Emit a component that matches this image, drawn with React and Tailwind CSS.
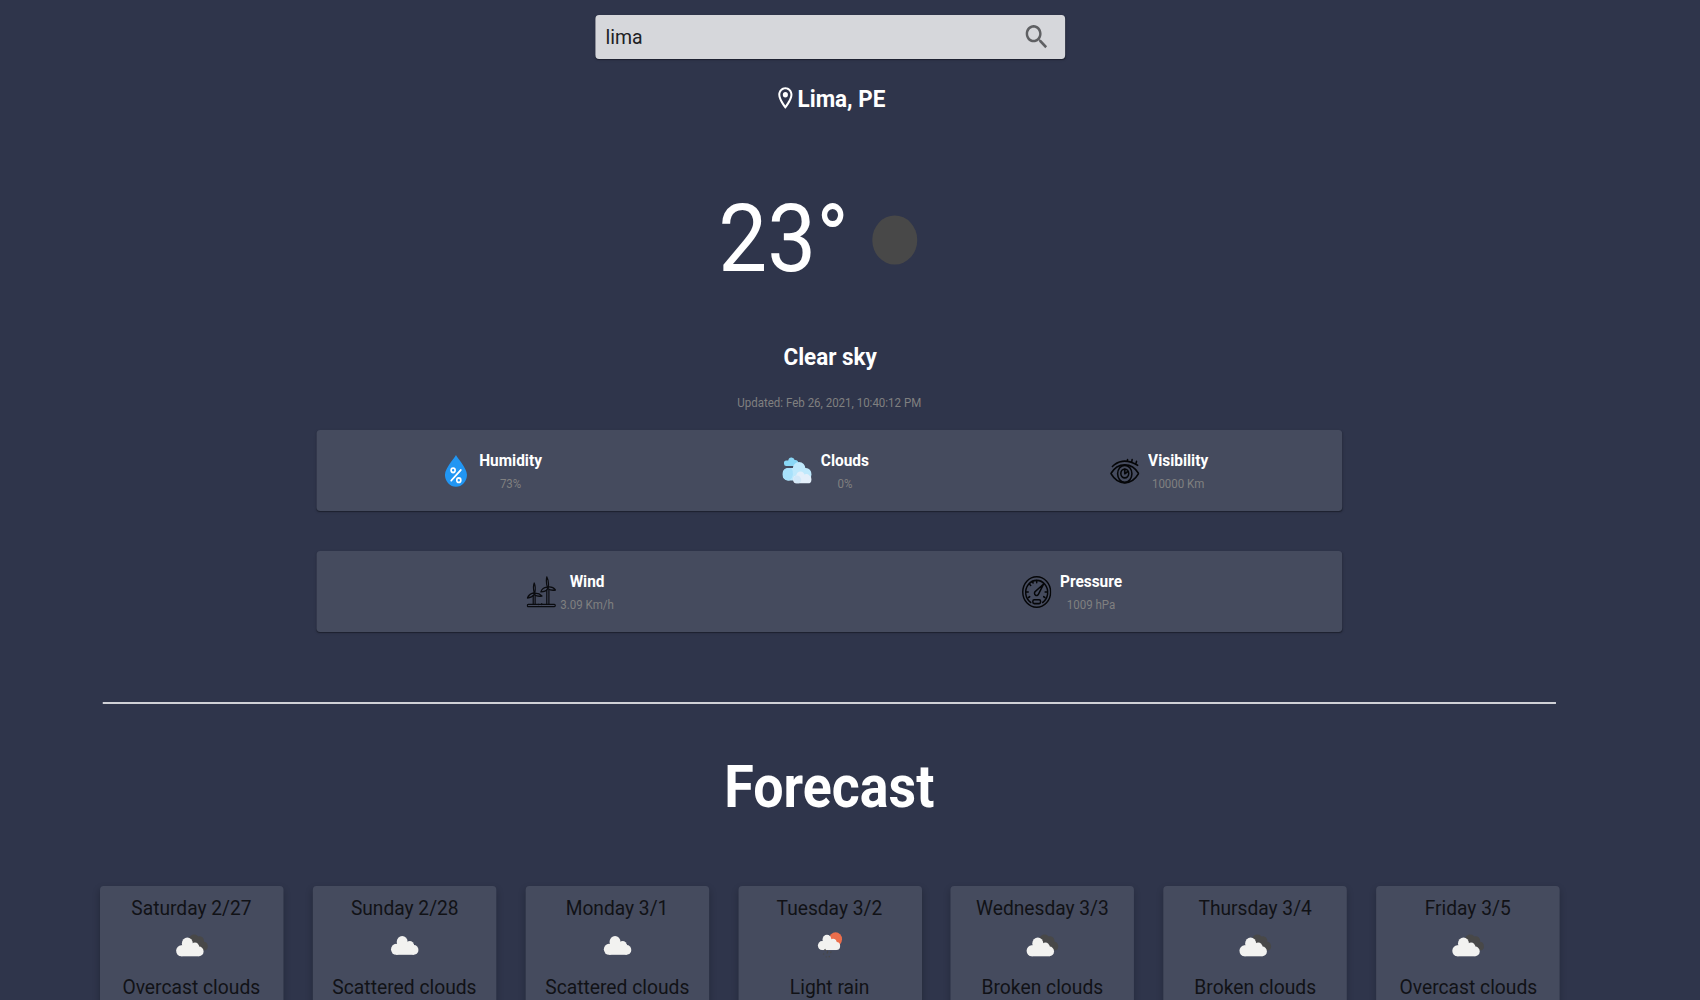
import React from "react";

function SearchIcon() {
  return (
    <svg viewBox="0 0 24 24" className="size-8 fill-[#5f6063]">
      <path d="M15.5 14h-.79l-.28-.27C15.41 12.59 16 11.11 16 9.5 16 5.91 13.09 3 9.5 3S3 5.91 3 9.5 5.91 16 9.5 16c1.61 0 3.09-.59 4.23-1.57l.27.28v.79l5 4.99L20.49 19l-4.99-5zm-6 0C7.01 14 5 11.99 5 9.5S7.01 5 9.5 5 14 7.01 14 9.5 11.99 14 9.5 14z" />
    </svg>
  );
}

function PinIcon() {
  return (
    <svg viewBox="0 0 24 24" className="-mt-0.5 h-[26px] w-[26px] fill-white">
      <path d="M12 2C8.13 2 5 5.13 5 9c0 5.25 7 13 7 13s7-7.75 7-13c0-3.87-3.13-7-7-7zM7 9c0-2.76 2.24-5 5-5s5 2.24 5 5c0 2.88-2.88 7.19-5 9.88C9.92 16.21 7 11.85 7 9z" />
      <circle cx="12" cy="9" r="2.5" />
    </svg>
  );
}

function HumidityIcon() {
  return (
    <svg viewBox="0 0 32 32" className="size-8 shrink-0">
      <path d="M16 0C17 2.500 28 13 28 19.800A12 12 0 0 1 4 19.800C4 13 15 2.500 16 0Z" fill="#2196f3" />
      <g fill="none" stroke="#fff" strokeWidth="1.800" strokeLinecap="round">
        <circle cx="12.900" cy="15.300" r="2.200" />
        <circle cx="19.100" cy="25.200" r="2.200" />
        <path d="M21.300 15 10.800 25.700" />
      </g>
    </svg>
  );
}

function CloudsIcon() {
  return (
    <svg viewBox="0 0 32 32" className="-mt-px size-8 shrink-0">
      <path d="M1.500 9.500a2.800 2.800 0 0 1 3-3h1.700a3.600 3.600 0 0 1 7-.5c2.500-.3 4.300 1.500 4.300 3.500L14 12H4.300a2.600 2.600 0 0 1-2.800-2.500Z" fill="#8ad7f5" />
      <circle cx="18" cy="15" r="7" fill="#bfe9fc" />
      <rect x="0" y="14" width="31.500" height="12.500" rx="6" fill="#bfe9fc" />
      <path d="M6 14h3.500a8.500 8.500 0 0 1-2 12.500H6A6 6 0 0 1 6 14Z" fill="#a8e1fb" />
      <circle cx="19.500" cy="22" r="4.600" fill="#e4effa" />
      <circle cx="26" cy="23.500" r="3.600" fill="#e4effa" />
      <rect x="11.500" y="21.500" width="20" height="7.800" rx="3.900" fill="#e4effa" />
      <path d="M14 22a4 4 0 0 1 4 7.300h-3a3.900 3.900 0 0 1-1-7.300Z" fill="#d3e8f8" />
    </svg>
  );
}

function VisibilityIcon() {
  return (
    <svg viewBox="0 0 32 32" className="size-8 shrink-0" fill="none" stroke="#050608" strokeWidth="1.700" strokeLinecap="round" strokeLinejoin="round">
      <path d="M.9 18.500C5 12 10.500 9.800 16 9.800s11 2.200 15.100 8.700C27 25 21.500 27.800 16 27.800S5 25 .9 18.500Z" />
      <path d="M2.500 11.500C7.500 6.500 17 3 30 10.300M19 6.500V4.600M23.500 7.500l.5-2.900M28 9l.8-2.600" />
      <ellipse cx="16" cy="18.800" rx="7.800" ry="8.500" />
      <circle cx="16" cy="18.500" r="4.300" />
      <path d="M16 14.500v4.200l3-2" strokeWidth="1.800" />
    </svg>
  );
}

function WindIcon() {
  return (
    <svg viewBox="0 0 32 32" className="size-8 shrink-0" fill="none" stroke="#0b0c10" strokeWidth="1.300" strokeLinecap="round" strokeLinejoin="round">
      <rect x=".7" y="28.300" width="30.600" height="2.300" rx="1.100" />
      <path d="M7.200 28V19.500M9.300 28V19.500M22 28V14M24.300 28V14M13 28.500h.1M16.500 27.700v.8" />
      <path d="M8.300 16.800C7.300 13.500 7.200 9.500 8.300 7c1.400 3 1.400 6.500.7 9.800ZM7.500 17C4.800 17.500 2 19.500.8 22c3-.3 6-1.500 7.500-3.200ZM9.200 17.200c2.600.1 5.800 1 7.600 2.800-3 .5-6 .3-8.100-1.200Z" />
      <path d="M22.500 11C21.500 7.500 21.200 4 22 .8c1.700 3 2.200 6.700 1.700 10ZM22 11.200c-3 .3-5.500 2.300-6.500 4.700 3 0 6-1 7.500-3ZM24 11c2.800-.2 5.800 1 7.500 3-3 .5-6 .2-8.300-1.300Z" />
    </svg>
  );
}

function PressureIcon() {
  return (
    <svg viewBox="0 0 32 32" className="size-8 shrink-0" fill="none" stroke="#050608" strokeWidth="1.600" strokeLinecap="round" strokeLinejoin="round">
      <circle cx="16" cy="16" r="15.200" />
      <path d="M9.500 26.500A12 12 0 1 1 22.500 26.500" />
      <rect x="11.800" y="23.800" width="8.400" height="3.800" rx="1.500" />
      <path d="M16 4.500v2.200M8 8l1.500 1.500M4.600 16h2.200M7 21.500l1.400-.8M27.400 16h-2.200M25 21.500l-1.400-.8M11.300 5.500l.8 1.500" />
      <path d="M23.500 8 18 18.200a2.300 2.300 0 1 1-3.700-2.600Z" />
    </svg>
  );
}

function Cloud({ transform, fill = "#f2f2f0" }) {
  return (
    <g transform={transform} fill={fill}>
      <circle cx="5.500" cy="13.300" r="5.500" />
      <circle cx="12.200" cy="6" r="6" />
      <circle cx="20.500" cy="9.500" r="4.500" />
      <circle cx="25" cy="13.900" r="4.900" />
      <rect x="5.500" y="8" width="19.500" height="10.800" />
    </g>
  );
}

function WeatherIcon({ kind }) {
  return (
    <svg viewBox="0 0 50 50" className="size-[50px]">
      {kind === "scattered" && <Cloud transform="translate(10.200 14)" />}
      {kind === "broken" && (
        <>
          <path d="M22 16a6 6 0 0 1 10-1.500 4.800 4.800 0 0 1 6.300 5.300A4.500 4.500 0 0 1 40 28.300H32Z" fill="#484848" />
          <Cloud transform="translate(8 15.500)" />
        </>
      )}
      {kind === "rain" && (
        <>
          <circle cx="30.800" cy="17.300" r="7" fill="#ec6e4c" />
          <Cloud transform="translate(11.500 12.800) scale(.81)" />
          <path d="m19 27 .8 1.800M22.500 29l-1.200 2.500M26 29.500l-.8 1.500M18 31.500l-.6 1M20.800 34.500l-.5.9M24.200 34l-.6 1.200" stroke="#484848" strokeWidth="1.300" />
        </>
      )}
    </svg>
  );
}

function Metric({ icon, label, value, gap = "gap-[11px]" }) {
  return (
    <div className="flex flex-1 items-center justify-center">
      <div className={"flex items-center " + gap}>
        {icon}
        <div className="mt-[3px] text-center">
          <div className="scale-x-105 text-base leading-6 font-bold text-white">{label}</div>
          <div className="scale-x-[1.045] text-xs leading-[23px] text-[#808080]">{value}</div>
        </div>
      </div>
    </div>
  );
}

const panel =
  "flex h-[81px] w-[1118px] items-center rounded bg-[#454b5e] shadow-[0_2px_1px_-1px_rgba(0,0,0,0.2),0_1px_1px_0_rgba(0,0,0,0.14),0_1px_3px_0_rgba(0,0,0,0.12)]";

const days = [
  ["Saturday 2/27", "broken", "Overcast clouds"],
  ["Sunday 2/28", "scattered", "Scattered clouds"],
  ["Monday 3/1", "scattered", "Scattered clouds"],
  ["Tuesday 3/2", "rain", "Light rain"],
  ["Wednesday 3/3", "broken", "Broken clouds"],
  ["Thursday 3/4", "broken", "Broken clouds"],
  ["Friday 3/5", "broken", "Overcast clouds"],
];

export default function App() {
  return (
    <div className="h-screen w-full overflow-hidden bg-[#2f354b] font-['Roboto',sans-serif]">
      <main className="flex w-[1808px] origin-top-left scale-x-[0.91743] flex-col items-center pt-[15px]">
        <div className="ml-px flex h-11 w-[512px] items-center justify-between rounded bg-[#d6d7db] pr-[15px] pl-[11px] shadow-[0_2px_1px_-1px_rgba(0,0,0,0.2),0_1px_1px_0_rgba(0,0,0,0.14),0_1px_3px_0_rgba(0,0,0,0.12)]">
          <input className="w-96 origin-left scale-x-[1.06] bg-transparent text-xl text-[#202124] outline-none" defaultValue="lima" />
          <SearchIcon />
        </div>

        <h2 className="mt-5 flex h-10 scale-x-[1.02] items-center text-2xl font-bold text-white">
          <PinIcon />
          Lima, PE
        </h2>

        <div className="mt-[71px] flex h-[100px] items-center">
          <span className="-mt-0.5 text-[95px] leading-[100px] text-white">23°</span>
          <svg viewBox="0 0 100 100" className="size-[100px]">
            <circle cx="50.300" cy="50" r="24.500" fill="#484848" />
          </svg>
        </div>

        <h2 className="mt-[53px] ml-px scale-x-[1.02] text-2xl leading-7 font-bold text-white">Clear sky</h2>
        <p className="mt-[22px] scale-x-[1.045] text-xs leading-5 text-[#808080]">Updated: Feb 26, 2021, 10:40:12 PM</p>

        <section className="mt-[17px] flex flex-col gap-10">
          <div className={panel + " pr-[18px] pl-2"}>
            <Metric icon={<HumidityIcon />} label="Humidity" value="73%" />
            <Metric icon={<CloudsIcon />} label="Clouds" value="0%" />
            <Metric icon={<VisibilityIcon />} label="Visibility" value="10000 Km" />
          </div>
          <div className={panel + " pr-[22px] pl-[3px]"}>
            <Metric icon={<WindIcon />} label="Wind" value="3.09 Km/h" gap="gap-1.5" />
            <Metric icon={<PressureIcon />} label="Pressure" value="1009 hPa" />
          </div>
        </section>

        <hr className="mt-[70px] h-0.5 w-[1584px] border-0 bg-[#d0d1d6]" />

        <h1 className="mt-[43px] text-[58.600px] leading-[80px] font-bold text-white">Forecast</h1>

        <section className="mt-[59px] ml-px flex gap-[31.850px]">
          {days.map(([day, kind, text]) => (
            <article
              key={day}
              className="flex h-[200px] w-[200px] flex-col items-center rounded bg-[#454b5e] pt-2.5 text-xl leading-6 text-[#111216] shadow-[0_3px_8px_0_rgba(0,0,0,0.2)]"
            >
              <h3 className="scale-x-[1.045]">{day}</h3>
              <div className="mt-0.5">
                <WeatherIcon kind={kind} />
              </div>
              <p className="mt-[3px] scale-x-[1.05]">{text}</p>
            </article>
          ))}
        </section>
      </main>
    </div>
  );
}
